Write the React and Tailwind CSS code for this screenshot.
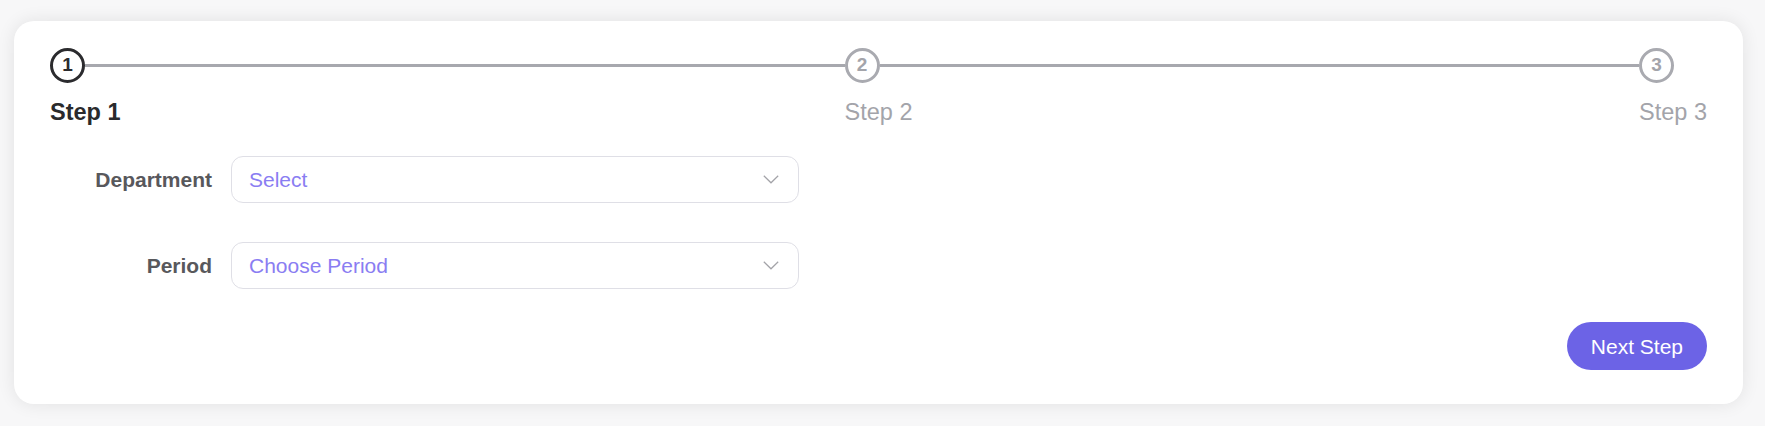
import React from "react";

function Chevron() {
  return (
    <svg width="16" height="9" viewBox="0 0 16 9" fill="none" className="shrink-0">
      <path d="M0.8 0.8 L8 7.8 L15.2 0.8" stroke="#a3a3a8" strokeWidth="1.2" fill="none" />
    </svg>
  );
}

function Field({ label, placeholder }) {
  return (
    <div className="flex items-center gap-[19px]">
      <div className="w-[162px] text-right text-[21px] font-bold text-[#58585c] leading-none">
        {label}
      </div>
      <div className="w-[568px] h-[47px] rounded-[12px] border-[1.5px] border-[#dfdfe6] bg-white flex items-center justify-between pl-[17px] pr-[19px]">
        <span className="text-[21px] text-[#8a7df2] leading-none">{placeholder}</span>
        <Chevron />
      </div>
    </div>
  );
}

export default function App() {
  return (
    <div
      className="w-[1765px] h-[426px] bg-[#f7f7f8] pt-[21px] pl-[14px] pr-[22px] pb-[22px]"
      style={{ fontFamily: '"Liberation Sans", Arial, sans-serif' }}
    >
      <div className="w-[1729px] h-[383px] bg-white rounded-[20px] shadow-[0_0_18px_rgba(0,0,0,0.09)] pt-[27px] pl-[36px] pr-[36px] flex flex-col">
        {/* Steps */}
        <div className="flex">
          <div className="flex-1 flex flex-col items-start">
            <div className="flex items-center w-full">
              <div className="w-[35px] h-[35px] rounded-full border-[3px] border-[#2b2b2e] flex items-center justify-center text-[19px] font-bold text-[#2b2b2e] shrink-0">
                1
              </div>
              <div className="flex-1 h-[3px] bg-[#a7a8ae]" />
            </div>
            <div className="mt-[12px] text-[23.5px] leading-[34px] font-bold text-[#2a2a2c]">Step 1</div>
          </div>
          <div className="flex-1 flex flex-col items-start">
            <div className="flex items-center w-full">
              <div className="w-[35px] h-[35px] rounded-full border-[3px] border-[#a9aab0] flex items-center justify-center text-[19px] font-bold text-[#a3a4aa] shrink-0">
                2
              </div>
              <div className="flex-1 h-[3px] bg-[#a7a8ae]" />
            </div>
            <div className="mt-[12px] text-[23.5px] leading-[34px] text-[#a3a4aa]">Step 2</div>
          </div>
          <div className="flex flex-col items-start">
            <div className="flex items-center">
              <div className="w-[35px] h-[35px] rounded-full border-[3px] border-[#a9aab0] flex items-center justify-center text-[19px] font-bold text-[#a3a4aa] shrink-0">
                3
              </div>
            </div>
            <div className="mt-[12px] text-[23.5px] leading-[34px] text-[#a3a4aa]">Step 3</div>
          </div>
        </div>

        {/* Form */}
        <div className="mt-[27px] flex flex-col gap-[39px]">
          <Field label="Department" placeholder="Select" />
          <Field label="Period" placeholder="Choose Period" />
        </div>

        <div className="mt-[33px] flex justify-end">
          <button className="h-[48px] px-[24px] rounded-full bg-[#6c63e6] text-white text-[21px] leading-none">
            Next Step
          </button>
        </div>
      </div>
    </div>
  );
}
